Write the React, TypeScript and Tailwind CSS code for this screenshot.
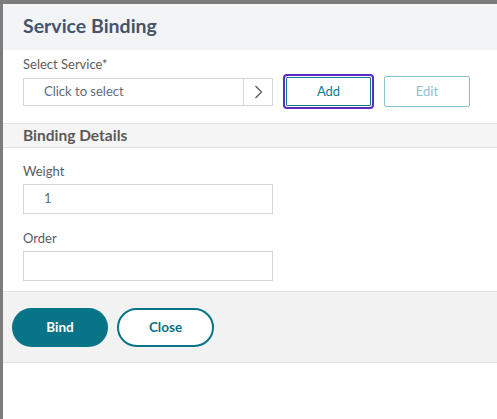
import React from 'react';

const font = { fontFamily: 'Lato, "Noto Sans", "Liberation Sans", sans-serif' };

const Field: React.FC<{ label: string; value?: string }> = ({ label, value }) => (
  <div className="flex flex-col">
    <label className="text-[13px] leading-[16px] text-[#5c5c5c] mb-[5px]">{label}</label>
    <div className="w-[250px] h-[30px] border border-[#d6d6d6] bg-white flex items-center pl-[20px] text-[13px] text-[#5e6b7b]">
      {value}
    </div>
  </div>
);

export default function App() {
  return (
    <div className="w-[497px] h-[419px] bg-[#7c7c7c] pt-[4px] pl-[3px] overflow-hidden" style={font}>
      <div className="h-full bg-white flex flex-col">
        {/* header */}
        <div className="h-[46px] bg-[#f3f4f6] flex items-center pl-[20px]">
          <h2 className="text-[19.5px] font-bold text-[#46536a] leading-none -mt-[2px]">Service Binding</h2>
        </div>

        {/* service select */}
        <div className="pl-[20px] pt-[6px] pb-[14px] border-b border-[#e2e2e2]">
          <div className="text-[13px] leading-[16px] text-[#5c5c5c] mb-[2px]">Select Service*</div>
          <div className="flex items-center">
            <div className="w-[250px] h-[28px] border border-[#d6d6d6] flex items-stretch">
              <div className="flex-1 flex items-center pl-[20px] text-[13px] text-[#5e6b7b]">Click to select</div>
              <div className="w-[29px] border-l border-[#d6d6d6] flex items-center justify-center">
                <svg width="9" height="14" viewBox="0 0 9 14" fill="none">
                  <path d="M1.5 1 L7.5 7 L1.5 13" stroke="#555" strokeWidth="1.2" />
                </svg>
              </div>
            </div>
            <button className="ml-[10px] w-[91px] h-[35px] rounded-[4px] border-2 border-[#5b2cc4] p-[1px]">
              <span className="block w-full h-full border border-[#0f7a8a] rounded-[1px] flex items-center justify-center text-[13px] text-[#137a96]">
                Add
              </span>
            </button>
            <button className="ml-[10px] w-[86px] h-[31px] rounded-[2px] border border-[#8ec1cc] flex items-center justify-center text-[13px] text-[#8ec1cc]">
              Edit
            </button>
          </div>
        </div>

        {/* binding details */}
        <div className="h-[24px] bg-[#f5f5f5] border-b border-[#e2e2e2] flex items-center pl-[20px]">
          <span className="text-[15.5px] leading-none font-bold text-[#5a5a5a]">Binding Details</span>
        </div>
        <div className="pl-[20px] pt-[15px] pb-[10px] flex flex-col gap-[16px] border-b border-[#e2e2e2]">
          <Field label="Weight" value="1" />
          <Field label="Order" />
        </div>

        {/* footer actions */}
        <div className="h-[71px] bg-[#f2f2f2] border-b border-[#e2e2e2] flex items-center pl-[9px] gap-[9px]">
          <button className="w-[96px] h-[39px] rounded-full bg-[#077487] text-white text-[13.5px] font-bold">Bind</button>
          <button className="w-[97px] h-[39px] rounded-full bg-white border-2 border-[#077487] text-[#0b6f82] text-[13.5px] font-bold">
            Close
          </button>
        </div>
      </div>
    </div>
  );
}
